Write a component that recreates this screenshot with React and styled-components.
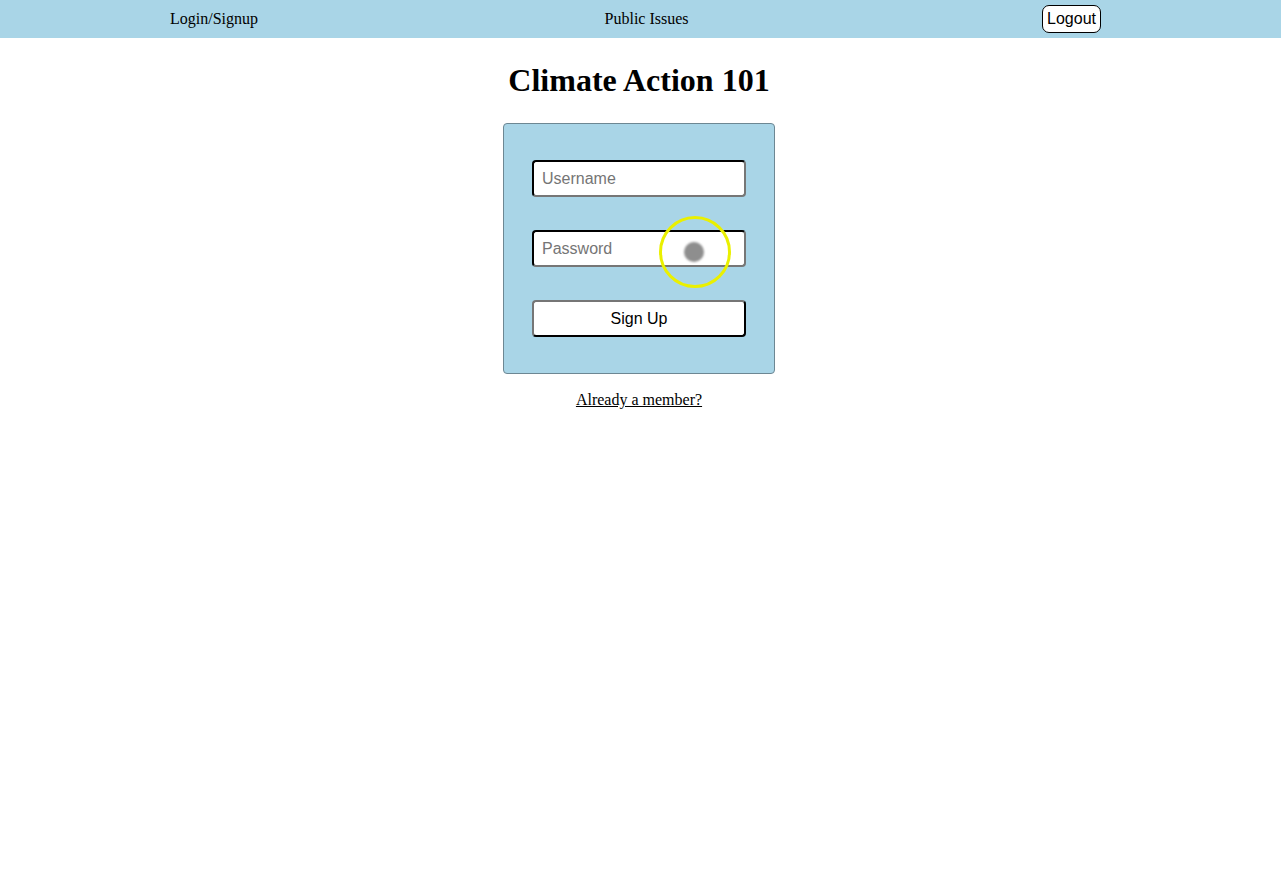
import React from "react";
import styled, { createGlobalStyle } from "styled-components";

const GlobalStyle = createGlobalStyle`
  html, body {
    margin: 0;
    padding: 0;
    background: #ffffff;
    font-family: "Liberation Serif", "Times New Roman", serif;
    color: #000;
  }
`;

const Page = styled.div`
  position: relative;
  min-height: 872px;
`;

const NavBar = styled.nav`
  display: flex;
  justify-content: space-between;
  align-items: center;
  height: 38px;
  padding: 0 180px 0 170px;
  background: #a9d5e7;
`;

const NavLink = styled.a`
  font-family: "Liberation Serif", "Times New Roman", serif;
  font-size: 16px;
  color: #000;
  text-decoration: none;
  cursor: pointer;
  margin-top: -1px;
  margin-right: ${(p) => (p.$middle ? "7px" : "0")};
`;

const LogoutButton = styled.button`
  font-family: "Liberation Sans", Arial, sans-serif;
  font-size: 16px;
  color: #000;
  background: #fff;
  border: 1px solid #000;
  border-radius: 7px;
  padding: 4px 4px;
  line-height: 18px;
  height: 28px;
  margin-top: -1px;
  cursor: pointer;
`;

const Main = styled.main`
  display: flex;
  flex-direction: column;
  align-items: center;
  padding-right: 3px;
`;

const Title = styled.h1`
  font-family: "Liberation Serif", "Times New Roman", serif;
  font-size: 32px;
  font-weight: bold;
  margin: 24px 0 24px;
  line-height: 37px;
`;

const Card = styled.form`
  width: 214px;
  padding: 36px 28px;
  background: #a9d5e7;
  border: 1px solid #6d8793;
  border-radius: 4px;
  display: flex;
  flex-direction: column;
  gap: 33px;
`;

const Field = styled.input`
  box-sizing: border-box;
  width: 214px;
  height: 37px;
  padding: 1px 8px;
  font-family: "Liberation Sans", Arial, sans-serif;
  font-size: 16px;
  background: #fff;
  border: 2px inset #767676;
  border-top-color: #1a1a1a;
  border-left-color: #1a1a1a;
  border-radius: 4px;
  outline: none;
  &::placeholder {
    color: #757575;
  }
`;

const SubmitButton = styled.button`
  box-sizing: border-box;
  width: 214px;
  height: 37px;
  font-family: "Liberation Sans", Arial, sans-serif;
  font-size: 16px;
  color: #000;
  background: #fff;
  border: 2px outset #767676;
  border-bottom-color: #1a1a1a;
  border-right-color: #1a1a1a;
  border-radius: 4px;
  cursor: pointer;
`;

const MemberLink = styled.a`
  margin-top: 17px;
  font-family: "Liberation Serif", "Times New Roman", serif;
  font-size: 16px;
  color: #000;
  text-decoration: underline;
  cursor: pointer;
`;

const CursorRing = styled.div`
  position: absolute;
  left: ${(p) => p.x - 36}px;
  top: ${(p) => p.y - 36}px;
  width: 66px;
  height: 66px;
  border: 3px solid #eaf000;
  border-radius: 50%;
  display: flex;
  align-items: center;
  justify-content: center;
  pointer-events: none;
  filter: blur(0.4px);
`;

const CursorDot = styled.div`
  width: 20px;
  height: 20px;
  margin: 0 2px 0 0;
  border-radius: 50%;
  background: #8e8e8e;
  filter: blur(0.8px);
`;

export default function App() {
  return (
    <Page>
      <GlobalStyle />
      <NavBar>
        <NavLink>Login/Signup</NavLink>
        <NavLink $middle>Public Issues</NavLink>
        <LogoutButton type="button">Logout</LogoutButton>
      </NavBar>
      <Main>
        <Title>Climate Action 101</Title>
        <Card onSubmit={(e) => e.preventDefault()}>
          <Field type="text" placeholder="Username" />
          <Field type="password" placeholder="Password" />
          <SubmitButton type="submit">Sign Up</SubmitButton>
        </Card>
        <MemberLink>Already a member?</MemberLink>
      </Main>
      <CursorRing x={695} y={252}>
        <CursorDot />
      </CursorRing>
    </Page>
  );
}
